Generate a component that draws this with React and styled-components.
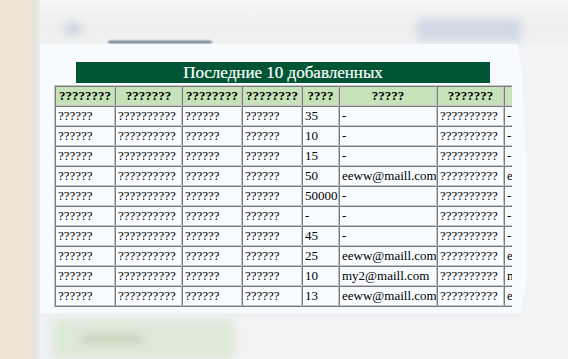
import styled, { createGlobalStyle } from "styled-components";

const GlobalStyle = createGlobalStyle`
  html, body {
    margin: 0;
    padding: 0;
    background: #f3f3f5;
  }
`

const Screen = styled.div`
  display: flex;
  width: 568px;
  height: 359px;
  overflow: hidden;
  font-family: "Liberation Serif", "Times New Roman", serif;
`

const Sidebar = styled.div`
  flex: 0 0 40px;
  background: linear-gradient(to right, #efe5d5 0, #efe5d5 31px, #e5e2dd 34px, #eeeeee 40px);
`

const Main = styled.div`
  flex: 1;
  display: flex;
  flex-direction: column;
  background: #f3f3f5;
`

const TopBar = styled.div`
  display: flex;
  height: 45px;
  background: linear-gradient(#f7f7f7, #eeeeee 60%, #f1f1f2);
`

const Blur = styled.div`
  filter: blur(${p => p.$blur || 4}px);
`

const Blob = styled(Blur)`
  width: 18px;
  height: 14px;
  margin: 22px 0 0 24px;
  border-radius: 50%;
  background: #ccd4e2;
`

const TabLine = styled(Blur)`
  align-self: flex-end;
  width: 104px;
  height: 2px;
  margin: 0 0 1px 26px;
  border-radius: 2px 2px 0 0;
  background: #3b5873;
`

const BlueBar = styled(Blur)`
  width: 104px;
  height: 22px;
  margin: 19px 0 0 205px;
  background: #cfd8e4;
`

const Panel = styled.div`
  width: 488px;
  height: 275px;
  padding: 18px 0 0 14px;
  box-sizing: border-box;
  background: #f7fbfe;
  clip-path: polygon(0 0, 477px 0, 482px 30px, 487px 130px, 486px 240px, 480px 275px, 0 275px);
`

const Title = styled.div`
  width: 414px;
  height: 21px;
  margin-left: 22px;
  background: #005634;
  color: #ffffff;
  font-size: 17px;
  line-height: 22px;
  text-align: center;
  -webkit-text-stroke: 0.2px #ffffff;
`

const TableClip = styled.div`
  width: 458px;
  margin-top: 2px;
  overflow: hidden;
`

const Table = styled.table`
  table-layout: fixed;
  width: 540px;
  border-collapse: separate;
  border-spacing: 0;
  border: 1px solid;
  border-color: #c4c4c4 #7a7a7a #7a7a7a #c4c4c4;
  font-size: 13px;
  line-height: 16px;
  color: #000;
  white-space: nowrap;
`

const Col = styled.col`
  width: ${p => p.$w}px;
`

const Head = styled.th`
  padding: 1px 2px;
  background: #c6e3ba;
  font-weight: bold;
  text-align: center;
  overflow: hidden;
  border: 1px solid;
  border-color: #7a7a7a #c4c4c4 #c4c4c4 #7a7a7a;
`

const Cell = styled.td`
  padding: 1px 2px;
  background: #f8fcff;
  text-align: left;
  overflow: hidden;
  border: 1px solid;
  border-color: #7a7a7a #c4c4c4 #c4c4c4 #7a7a7a;
`

const BottomBar = styled.div`
  flex: 1;
  display: flex;
  padding: 6px 0 0 12px;
  background: #f2f2f4;
`

const GreenButton = styled(Blur)`
  display: flex;
  align-items: center;
  width: 182px;
  height: 40px;
  padding-left: 30px;
  box-sizing: border-box;
  background: #dde9d7;
`

const ButtonText = styled.div`
  width: 60px;
  height: 6px;
  background: #b9c9b2;
`

const widths = [60, 67, 60, 60, 37, 98, 67, 91]
const headers = ["????????", "???????", "????????", "????????", "????", "?????", "???????", "??????"]

const rows = [
  ["35", "-", "-"],
  ["10", "-", "-"],
  ["15", "-", "-"],
  ["50", "eeww@maill.com", "eeww@maill.com"],
  ["50000", "-", "-"],
  ["-", "-", "-"],
  ["45", "-", "-"],
  ["25", "eeww@maill.com", "eeww@maill.com"],
  ["10", "my2@maill.com", "my2@maill.com"],
  ["13", "eeww@maill.com", "eeww@maill.com"],
]

const App = () => {
  return (
    <Screen>
      <GlobalStyle />
      <Sidebar />
      <Main>
        <TopBar>
          <Blob />
          <TabLine $blur={1} />
          <BlueBar $blur={5} />
        </TopBar>
        <Panel>
          <Title>Последние 10 добавленных</Title>
          <TableClip>
            <Table>
              <colgroup>
                {widths.map((w, i) => <Col key={i} $w={w} />)}
              </colgroup>
              <thead>
                <tr>
                  {headers.map((h, i) => <Head key={i}>{h}</Head>)}
                </tr>
              </thead>
              <tbody>
                {rows.map((r, i) => (
                  <tr key={i}>
                    <Cell>??????</Cell>
                    <Cell>??????????</Cell>
                    <Cell>??????</Cell>
                    <Cell>??????</Cell>
                    <Cell>{r[0]}</Cell>
                    <Cell>{r[1]}</Cell>
                    <Cell>??????????</Cell>
                    <Cell>{r[2]}</Cell>
                  </tr>
                ))}
              </tbody>
            </Table>
          </TableClip>
        </Panel>
        <BottomBar>
          <GreenButton $blur={5}>
            <ButtonText />
          </GreenButton>
        </BottomBar>
      </Main>
    </Screen>
  )
};

export default App;
